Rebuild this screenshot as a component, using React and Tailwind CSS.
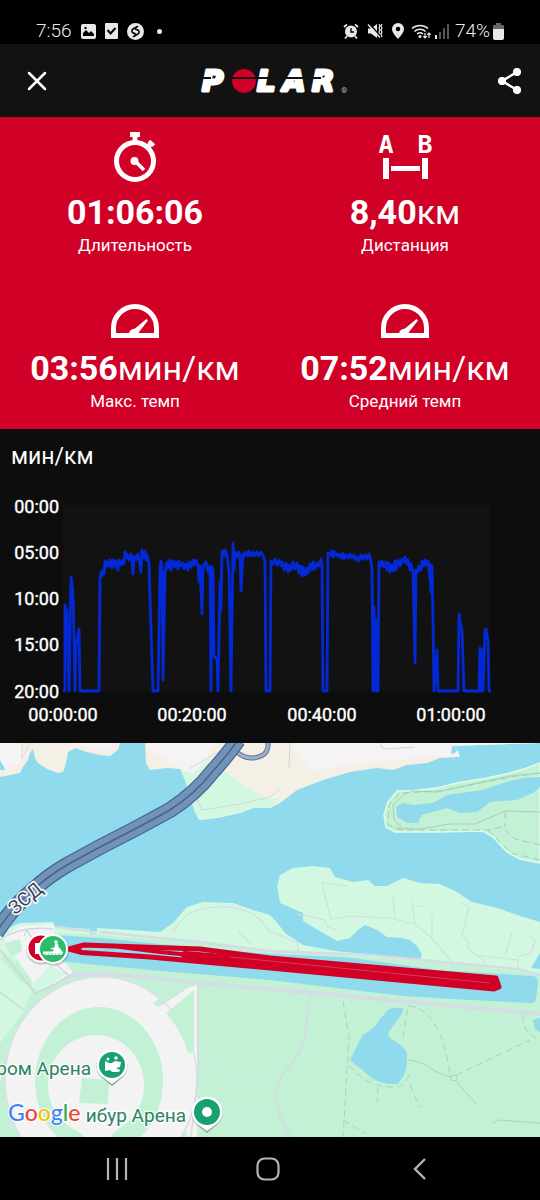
import React from 'react';

const stats = [
  { icon: TimerIcon, value: '01:06:06', unit: '', label: 'Длительность' },
  { icon: DistanceIcon, value: '8,40', unit: 'км', label: 'Дистанция' },
  { icon: GaugeIcon, value: '03:56', unit: 'мин/км', label: 'Макс. темп' },
  { icon: GaugeIcon, value: '07:52', unit: 'мин/км', label: 'Средний темп' },
];

const pacePoints =
  '63,201 65,201 65,115 67,122 69,201 71,87 73,104 74,145 75,201 76,155 78,145 79,139 80,201 99,201 100,88 101,82 102,86 103,80 104,84 105,71 106,77 107,72 109,76 110,70 112,78 113,70 115,76 116,71 118,80 119,70 121,75 123,70 124,74 125,62 126,68 127,64 129,70 131,64 132,70 133,84 134,66 136,70 138,64 139,69 141,82 142,60 143,67 145,61 146,70 147,65 149,74 151,140 153,201 158,201 160,80 161,71 162,76 163,190 165,83 167,72 168,78 170,70 171,80 173,71 175,77 176,72 178,79 179,71 181,76 183,73 184,79 186,74 188,80 189,72 191,77 193,70 194,75 196,70 198,76 199,92 200,76 202,124 203,78 204,74 206,72 208,82 210,76 211,201 212,77 213,80 214,166 217,170 218,201 220,92 221,120 222,61 224,66 225,60 227,65 229,82 231,201 233,53 234,80 235,62 237,67 239,62 240,66 241,101 243,64 244,67 246,62 248,66 249,61 251,66 253,62 255,66 257,62 259,66 261,62 263,65 265,72 266,201 270,201 271,71 273,74 275,69 277,75 279,70 281,76 282,72 284,80 286,73 288,82 289,75 291,80 293,72 295,79 297,73 299,83 300,76 302,86 303,77 305,85 307,78 308,83 310,74 312,80 313,72 315,79 317,73 319,76 321,69 322,76 323,201 327,201 328,63 330,65 332,61 333,67 335,62 337,66 339,64 341,68 343,63 344,69 346,65 348,68 350,64 352,68 354,65 356,70 358,67 359,71 361,65 363,69 365,65 367,69 369,64 370,67 372,78 373,201 374,117 376,201 377,130 378,201 379,72 381,76 382,71 384,77 386,72 387,80 389,73 390,82 392,75 393,81 395,71 396,80 398,70 400,76 402,69 404,72 405,67 407,74 408,70 410,80 411,74 413,82 415,173 416,80 418,82 419,76 421,80 422,71 424,76 425,70 427,75 428,71 430,90 430,74 431,102 432,76 433,130 434,201 437,160 438,201 458,201 459,124 460,132 462,140 464,201 479,201 480,158 481,201 482,160 483,201 485,140 486,139 488,150 489,201 491,201';

function TimerIcon() {
  return (
    <svg viewBox="0 0 44 51" className="h-[51px] w-11" fill="none" stroke="white" aria-hidden="true">
      <circle cx="22" cy="30" r="18.500" strokeWidth="5" />
      <path d="M17 1h10v5h-2.500v4h-5v-4H17z" fill="white" stroke="none" />
      <path d="M34 17l4.500-5" strokeWidth="5" />
      <path d="M36 10l5 4.500" strokeWidth="3.500" />
      <circle cx="21.500" cy="30" r="4" fill="white" stroke="none" />
      <path d="M22 30l9 9" strokeWidth="3.500" />
    </svg>
  );
}

function DistanceIcon() {
  return (
    <svg viewBox="0 0 60 51" className="h-[51px] w-[60px] overflow-visible" fill="white" aria-hidden="true">
      <g fontFamily="'DejaVu Sans Mono', monospace" fontWeight="700" fontSize="25" textAnchor="middle">
        <text x="11" y="22">A</text>
        <text x="50" y="22">B</text>
      </g>
      <path d="M8 27h6v21H8zM47 27h6v21h-6zM16 35h29v5H16z" />
    </svg>
  );
}

function GaugeIcon() {
  return (
    <svg viewBox="0 0 48 34" className="h-[34px] w-12" aria-hidden="true">
      <path d="M2.500 31.500V24a21.500 21.500 0 0 1 43 0v7.500z" fill="none" stroke="white" strokeWidth="5" />
      <path d="M18 30c0-3 2-5 6-5.500L35.500 15l1.500 1.500L28 28l-1 3z" fill="white" />
    </svg>
  );
}

function StatusBar() {
  return (
    <div className="flex h-11 items-center justify-between bg-black pt-[18px] pr-9 pl-9 text-[19px] leading-6 text-[#e8e8e8]">
      <div className="flex items-center gap-[9px]">
        <span className="font-light">7:56</span>
        <svg viewBox="0 0 15 15" className="size-[15px]" aria-hidden="true">
          <rect width="15" height="15" rx="2" fill="#e8e8e8" />
          <path d="M2 12V9l3-3 3 3 2-2 3 3v2z" fill="black" />
          <circle cx="4.500" cy="4" r="1.200" fill="black" />
        </svg>
        <svg viewBox="0 0 13 16" className="h-4 w-[13px]" aria-hidden="true">
          <rect width="13" height="16" rx="1" fill="#e8e8e8" />
          <path d="M2.500 7l3 3.500 5-5.500" fill="none" stroke="black" strokeWidth="2" />
        </svg>
        <svg viewBox="0 0 17 17" className="size-[17px]" aria-hidden="true">
          <circle cx="8.500" cy="8.500" r="8.500" fill="#e8e8e8" />
          <path d="M10.500 3.500L6 6a2.300 2.300 0 0 0-.5 3.500l3 1.500M6.500 13.500l4.500-2.500a2.300 2.300 0 0 0 .5-3.500l-3-1.500" fill="none" stroke="black" strokeWidth="1.600" strokeLinecap="round" />
        </svg>
        <span className="ml-1 size-[5px] rounded-full bg-[#e8e8e8]" />
      </div>
      <div className="flex items-center gap-1.5">
        <svg viewBox="0 0 16 16" className="mr-0.5 size-4" fill="none" stroke="#e8e8e8" aria-hidden="true">
          <circle cx="8" cy="8.500" r="6" fill="#e8e8e8" stroke="none" />
          <path d="M1 4l3-2.700M15 4l-3-2.700M4 13l-2 2.500M12 13l2 2.500" strokeWidth="1.700" />
          <path d="M8 5v4h3" stroke="black" strokeWidth="1.300" />
        </svg>
        <svg viewBox="0 0 16 16" className="mr-0.5 size-4" fill="none" stroke="#e8e8e8" aria-hidden="true">
          <path d="M1 5.500h3L10 1v14l-6-4.500H1z" fill="#e8e8e8" stroke="none" />
          <path d="M2 0l11 13" stroke="black" strokeWidth="1.500" />
          <path d="M1 1.500l12 13" strokeWidth="1.500" />
          <path d="M12 1l1 2-1 2 1 2-1 2 1 2M15 1l-1 2 1 2-1 2 1 2-1 2 1 3" strokeWidth="1.200" />
        </svg>
        <svg viewBox="0 0 14 16" className="h-4 w-3.5" aria-hidden="true">
          <path fillRule="evenodd" d="M7 0a6 6 0 0 1 6 6c0 3.500-4 7.500-6 10-2-2.500-6-6.500-6-10a6 6 0 0 1 6-6zm0 3.700a2.300 2.300 0 1 0 0 4.600 2.300 2.300 0 0 0 0-4.600z" fill="#e8e8e8" />
        </svg>
        <svg viewBox="0 0 20 16" className="h-4 w-5" fill="none" stroke="#e8e8e8" aria-hidden="true">
          <path d="M1 5.500a12 12 0 0 1 16 0M3.500 8.500a8 8 0 0 1 11 0M6 11a4.800 4.800 0 0 1 6 0" strokeWidth="1.600" />
          <circle cx="9" cy="13.500" r="1.500" fill="#e8e8e8" stroke="none" />
          <path d="M14 10v5m-1.800-1.800L14 15l1.800-1.800M18 15v-5m-1.800 1.800L18 10l1.800 1.800" strokeWidth="1.200" />
        </svg>
        <svg viewBox="0 0 14 16" className="-ml-0.5 h-4 w-3.5" aria-hidden="true">
          <path d="M0 12h2v4H0z" fill="#e8e8e8" />
          <path d="M4 9h2v7H4zM8 5h2v11H8zM12 1h2v15h-2z" fill="#555" />
        </svg>
        <div className="flex items-center gap-[3px]">
          <span className="font-light">74%</span>
          <svg viewBox="0 0 11 17" className="h-[17px] w-[11px]" aria-hidden="true">
            <path d="M3 0h5v2h2a1 1 0 0 1 1 1v4H0V3a1 1 0 0 1 1-1h2z" fill="#666" />
            <path d="M0 6h11v9a2 2 0 0 1-2 2H2a2 2 0 0 1-2-2z" fill="#e8e8e8" />
          </svg>
        </div>
      </div>
    </div>
  );
}

function PolarLogo() {
  return (
    <svg viewBox="0 0 150 40" className="h-10 w-[150px] overflow-visible" role="img" aria-label="Polar">
      <g fill="white" stroke="white" strokeWidth="3" strokeLinejoin="round" fontFamily="'DejaVu Sans', sans-serif" fontWeight="700" fontStyle="italic" fontSize="29">
        <text x="3" y="30">P</text>
        <text x="58" y="30">L</text>
        <text x="84" y="30">A</text>
        <text x="113" y="30">R</text>
      </g>
      <circle cx="45" cy="20" r="12.500" fill="#d00027" stroke="#121212" />
      <path d="M2 16h10v2H2zM31 16h43v2H31zM82 16h26v2H82zM112 16h10v2h-10z" fill="#121212" />
      <text x="142" y="32" fill="#bbb" fontSize="8">®</text>
    </svg>
  );
}

function Header() {
  return (
    <header className="grid h-[73px] grid-cols-[1fr_auto_1fr] items-center bg-[#121212] pr-[17px] pl-[25px]">
      <button type="button" aria-label="Close" className="justify-self-start">
        <svg viewBox="0 0 24 24" className="size-6" fill="none" stroke="white" strokeWidth="2.500" strokeLinecap="round">
          <path d="M4 4l16 16M20 4L4 20" />
        </svg>
      </button>
      <PolarLogo />
      <button type="button" aria-label="Share" className="justify-self-end">
        <svg viewBox="0 0 26 28" className="h-7 w-[26px]" fill="white" stroke="white">
          <path d="M20 5L5 14l15 9" fill="none" strokeWidth="2.500" />
          <circle cx="20" cy="5" r="3.700" />
          <circle cx="5" cy="14" r="3.700" />
          <circle cx="20" cy="23" r="3.700" />
        </svg>
      </button>
    </header>
  );
}

function Stat({ icon: Icon, value, unit, label }) {
  return (
    <div className="flex flex-col items-center">
      <Icon />
      <p className="mt-2.5 text-[34px] leading-10 font-bold">
        {value}
        <span className="font-normal">{unit}</span>
      </p>
      <p className="text-[17px] leading-[26px]">{label}</p>
    </div>
  );
}

function PaceChart() {
  return (
    <section className="bg-[#0d0d0d] pt-3">
      <h2 className="px-[11px] text-[23px] leading-8">мин/км</h2>
      <svg viewBox="0 0 540 254" className="mt-4 block w-full" role="img" aria-label="мин/км">
        <rect x="63" y="16" width="427" height="186" fill="#121212" />
        <polyline points={pacePoints} fill="none" stroke="#0329d6" strokeWidth="2.800" strokeLinejoin="round" transform="translate(0 1)" />
        <g fill="white" stroke="white" strokeWidth="0.400" fontSize="18" textAnchor="end">
          <text x="59" y="24">00:00</text>
          <text x="59" y="70">05:00</text>
          <text x="59" y="116">10:00</text>
          <text x="59" y="162">15:00</text>
          <text x="59" y="209">20:00</text>
        </g>
        <g fill="white" stroke="white" strokeWidth="0.400" fontSize="18" textAnchor="middle">
          <text x="63" y="232">00:00:00</text>
          <text x="192" y="232">00:20:00</text>
          <text x="322" y="232">00:40:00</text>
          <text x="451" y="232">01:00:00</text>
        </g>
      </svg>
    </section>
  );
}

function RouteMap() {
  return (
    <svg viewBox="0 0 540 394" className="block w-full bg-[#90daee]" role="img" aria-label="Map">
      {/* north shore */}
      <path d="M0 0H120L118 7 110 13 100 12 87 9 75 5 68 9 66 20 63 29 58 30 47 26 38 20 35 15 33 6 30 10 28 17 23 24 20 30 0 34z" fill="#f5f0e5" />
      <path d="M0 0H22V20L0 28zM42 0H118L110 8 72 0z" fill="#f5f3f4" />
      <path d="M0 17L4 24 5 27 0 27z" fill="#90daee" />
      <path d="M22 0V16L30 0" fill="none" stroke="#d7dbe4" />
      <path d="M145 0L146 20 150 27 167 25 180 26 185 37 190 54 195 69 199 77 217 75 240 70 253 65 270 65 280 60 297 47 323 37 350 29 377 25 393 27 407 22 427 20 440 15 460 14 458 7 452 3 540 0z" fill="#f5f0e5" />
      <path d="M147 0H218L192 31 147 6zM293 0L310 28 350 22 397 17 440 13 460 13 452 3 540 0z" fill="#f5f3f4" />
      <path d="M452 3L458 7 455 10 451 11z" fill="#90daee" />
      <path d="M180 26L193 31 207 17 263 54 280 56 270 65 253 65 240 70 217 75 199 77 195 69 190 54 185 37z" fill="#d3f8e2" />
      <path d="M196 54L202 67 240 61 270 54 279 47M290 0L289 25M381 0V4L388 6 414 4M189 26L233 0" fill="none" stroke="#d2d6df" />

      {/* peninsula */}
      <path d="M540 20L527 25 510 30 487 35 457 40 437 45 410 48 397 48 388 59 384 72 386 84 395 89 437 89 483 88 493 94 507 109 520 116 540 120z" fill="#c3f1d5" stroke="#dffbea" strokeWidth="1.500" />
      <path d="M540 34L523 35 503 40 483 47 447 52 433 60 413 62 403 60 396 64 397 74 407 80 418 80 422 72 447 65 460 70 477 69 490 59 517 57 533 50 540 44z" fill="#90daee" />
      <path d="M540 30L510 33 437 49 412 48 402 53 393 62 394 76 401 84M540 69L505 68 475 81 450 81 420 86 396 85" fill="none" stroke="#a9cdbb" />
      <path d="M540 30L510 34 440 48 400 50 389 62 388 82 400 87 488 87 502 84 515 96 540 102M488 87L511 110 540 117M505 69V84" fill="none" stroke="#a0cdb7" strokeDasharray="7 4" />

      {/* land south of the bay */}
      <path d="M0 189L20 180 53 179 55 184 90 186V193L96 193 97 185 160 189 173 180 187 164 203 159 233 160 253 167 270 172 287 190 303 200 303 170 280 160 277 144 280 132 293 125 313 123 330 125 335 134 353 139 368 137 375 143 387 143 403 135 420 140 440 141 457 149 472 159 497 165 517 172 540 179V394H0z" fill="#d3f8e2" />
      <path d="M270 170L277 144 280 160 290 170 313 184 337 198 350 195 358 187 365 182 377 187 387 194 402 195 410 197 418 204 422 212 420 216 375 212 335 208 303 202 285 190z" fill="#90daee" />
      <path d="M540 210L531 225 540 226z" fill="#90daee" />
      <path d="M53 190L100 192 200 200 270 208 370 214 453 221 517 228 540 233V394H0V230z" fill="#c3f1d5" />
      <path d="M0 220L35 240 24 268 0 300z" fill="#d3f8e2" />

      {/* rowing canal */}
      <path d="M54 192L100 195 180 203 270 211 340 214 353 215 437 227 533 233Q538 234 538 240L536 256Q535 261 529 260L470 257 403 253 270 237 150 227 67 219 50 215z" fill="#90daee" />
      <g fill="none" stroke="#d3dde3" strokeWidth="2">
        <path d="M100 189L200 199 270 208 370 212 453 220 517 226 540 232M55 184L90 188" strokeWidth="2.500" />
        <path d="M63 233C85 229 120 231 200 240L270 246 403 258 540 271" strokeWidth="4" />
        <path d="M310 250L305 294Q303 305 291 321 282 332 278 340 274 357 280 374L290 394M410 257V262" />
        <path d="M323 145V140L347 143M323 145L331 176 350 173 388 175 415 181 431 194 453 220M297 171L325 177 327 183 337 188M393 153L395 176M412 159L415 181M412 163H423M432 173V194M461 160L469 164 462 192 468 199V205L476 212 484 216 483 222M476 212L518 217V226M505 213L512 189M529 192L535 198 531 210 518 214M173 190Q185 164 218 164 255 163 268 187L298 200V208M238 189L252 202" strokeWidth="1.200" />
        <path d="M191 327L270 332M191 362L270 368M232 387L270 378" strokeWidth="1" stroke="#cce9da" />
      </g>

      {/* start area */}
      <path d="M3 194L20 183 53 181 55 190 45 195 44 216 65 220 73 229 58 239 38 247 8 203z" fill="#f3f3f4" />
      <path d="M5 200L20 196 22 208 12 214zM5 210L20 224 36 246 20 238 0 215z" fill="#c3f1d5" />
      <path d="M66 231L40 250 31 243 50 222z" fill="#d3f8e2" />
      <path d="M0 197Q20 182 53 186M24 193L27 187 33 197M0 207L35 250Q50 245 69 233L55 220M0 249L25 268" fill="none" stroke="#cfd5df" strokeWidth="1.500" />
      <path d="M90 190h6" stroke="#d3dde3" strokeWidth="4" />

      {/* stadium */}
      <path d="M152 257L197 242V394H188L160 330z" fill="#f3f3f4" />
      <ellipse cx="101" cy="337" rx="96" ry="103" fill="#f3f3f4" stroke="#dcdfe8" strokeWidth="1.500" />
      <path d="M166 270Q182 288 188 310L194 309V247z" fill="#c3f1d5" />
      <path d="M154 260L158 264 187 245 176 244z" fill="#c3f1d5" stroke="#d9dfe4" />
      <ellipse cx="99" cy="338" rx="64" ry="74" fill="#c3f1d5" />
      <ellipse cx="96" cy="342" rx="48" ry="50" fill="#f3f3f4" />
      <path d="M55 368L85 394H110L140 364 118 370 96 376z" fill="#f3f3f4" />
      <path d="M82 335L109 337 108 361 79 360z" fill="#c3f1d5" />
      <path d="M198 242V330L191 394" fill="none" stroke="#d5dae4" strokeWidth="1.500" />

      {/* ponds and footpaths */}
      <path d="M387 268Q390 264 403 265 403 271 398 276L388 290Q388 294 393 297 404 303 407 310 408 322 404 332L398 341Q382 342 372 335L350 317 360 297 363 292Q374 286 380 276z" fill="#90daee" />
      <path d="M540 275L533 277 535 286 540 289z" fill="#90daee" />
      <path d="M408 317Q422 318 435 328 445 334 453 334M456 338L476 361M493 380L499 377 540 380" fill="none" stroke="#a3d7b7" />
      <circle cx="454" cy="335" r="3" fill="#c3f1d5" stroke="#a3d7b7" />
      <path d="M343 258L349 295 343 394M349 322Q368 346 398 344 407 340 410 328M403 295L408 263Q440 265 450 331M456 332L530 297M378 344L377 360M410 342L420 365M343 377L366 391M523 272Q522 290 540 297" fill="none" stroke="#a9d4b9" strokeDasharray="7 4" />

      {/* highway */}
      <path d="M238 10Q250 19 263 12 269 8 268 -2" fill="none" stroke="#5c7298" strokeWidth="5" />
      <path d="M238 10Q250 19 263 12 269 8 268 -2" fill="none" stroke="#9db0cc" strokeWidth="3" />
      <g fill="none">
        <path d="M238 -3Q225 15 213 28 195 51 170 67 150 78 133 87L100 104 67 122Q48 133 33 147 13 163 -4 190" stroke="#48658f" strokeWidth="16" />
        <path d="M238 -3Q225 15 213 28 195 51 170 67 150 78 133 87L100 104 67 122Q48 133 33 147 13 163 -4 190" stroke="#7293b8" strokeWidth="13.500" />
        <path d="M238 -3Q225 15 213 28 195 51 170 67 150 78 133 87L100 104 67 122Q48 133 33 147 13 163 -4 190" stroke="#47628f" strokeWidth="1.500" />
      </g>

      {/* track */}
      <g fill="none" stroke="#d00027" strokeWidth="5" strokeLinecap="round" strokeLinejoin="round">
        <path d="M69 206L84 202 200 206 270 215 496 235 499 244 494 246 270 225 150 214 82 209.500z" />
        <path d="M185 212L270 219 494 241" strokeWidth="8" />
        <path d="M120 204L160 209 200 213" strokeWidth="4" />
        <path d="M74 206H80" strokeWidth="3" />
      </g>
      <path d="M230 214L370 228 490 240" fill="none" stroke="#de4862" strokeWidth="0.800" />

      <circle cx="41" cy="207" r="15" fill="#777" opacity="0.300" />
      <circle cx="41" cy="205" r="13.500" fill="#d00027" stroke="white" strokeWidth="2" />
      <path d="M35 200h8v11h-8z" fill="white" />
      <circle cx="54" cy="208" r="15" fill="#777" opacity="0.300" />
      <circle cx="53" cy="206" r="14" fill="#2dbd6a" stroke="white" strokeWidth="2" />
      <circle cx="56" cy="199" r="1.800" fill="white" />
      <path d="M55 200.500h3l.5 3.500 3 3v2h-9l1.500-3-3 .5v-1.500l3.500-.5z" fill="white" />
      <path d="M43 208.500H63V210.500L61 212H44L43 210.500z" fill="white" />
      <path d="M44 211H62" stroke="#2dbd6a" strokeDasharray="2 1.500" strokeWidth="0.800" />

      {/* labels */}
      <g fontSize="19" stroke="white" strokeWidth="3" strokeLinejoin="round" paintOrder="stroke">
        <text x="91" y="332" fill="#2e8264" strokeOpacity="0.700" textAnchor="end">ром Арена</text>
        <text x="186" y="379" fill="#2e8264" strokeOpacity="0.700" textAnchor="end">ибур Арена</text>
        <text x="25" y="162" fill="#3c4560" textAnchor="middle" transform="rotate(-40 25 155)">ЗСД</text>
      </g>
      <g>
        <path d="M112 342L101 333A15.500 15.500 0 1 1 123 333z" fill="#8aa89a" transform="translate(0 1)" />
        <path d="M112 341L101 333A15.500 15.500 0 1 1 123 333z" fill="white" />
        <circle cx="112" cy="322" r="13" fill="#18a071" />
        <path d="M105 318l4 2 3 0 3-2 6 1-1 5-4 1 4 2v1l-2 1h-6l-2-2-5 1z" fill="white" />
        <circle cx="108" cy="316" r="1.500" fill="white" />
        <circle cx="116" cy="315" r="1.800" fill="white" />
        <path d="M207 389L196 380A15.500 15.500 0 1 1 218 380z" fill="#8aa89a" transform="translate(0 1)" />
        <path d="M207 388L196 380A15.500 15.500 0 1 1 218 380z" fill="white" />
        <circle cx="207" cy="369" r="13" fill="#18a071" />
        <circle cx="207" cy="369" r="5" fill="white" />
      </g>
      <text x="8" y="378" fontSize="23" fontWeight="500" fontFamily="Lato, sans-serif" stroke="white" strokeWidth="2" paintOrder="stroke">
        <tspan fill="#4285f4">G</tspan>
        <tspan fill="#ea4335">o</tspan>
        <tspan fill="#fbbc05">o</tspan>
        <tspan fill="#4285f4">g</tspan>
        <tspan fill="#34a853">l</tspan>
        <tspan fill="#ea4335">e</tspan>
      </text>
    </svg>
  );
}

function NavBar() {
  return (
    <nav className="grid h-[63px] grid-cols-3 place-items-center bg-black pr-11 pl-10">
      <button type="button" aria-label="Recent apps">
        <svg viewBox="0 0 24 24" className="size-6" stroke="#b5b5b5" strokeWidth="2.200">
          <path d="M4 1v22M13 1v22M22 1v22" />
        </svg>
      </button>
      <button type="button" aria-label="Home">
        <svg viewBox="0 0 24 24" className="size-6" fill="none" stroke="#b5b5b5" strokeWidth="2.200">
          <rect x="1.500" y="1.500" width="21" height="21" rx="7" />
        </svg>
      </button>
      <button type="button" aria-label="Back">
        <svg viewBox="0 0 24 24" className="size-6" fill="none" stroke="#b5b5b5" strokeWidth="2.400">
          <path d="M17 2L7 12l10 10" />
        </svg>
      </button>
    </nav>
  );
}

function App() {
  return (
    <div className="min-h-screen bg-black font-[Roboto,sans-serif] text-white">
      <StatusBar />
      <Header />
      <main>
        <section className="grid grid-cols-2 gap-y-[46px] bg-[#d00027] pt-3.5 pb-[15px]">
          {stats.map((stat) => (
            <Stat key={stat.label} {...stat} />
          ))}
        </section>
        <PaceChart />
        <RouteMap />
      </main>
      <NavBar />
    </div>
  );
}

export default App;
